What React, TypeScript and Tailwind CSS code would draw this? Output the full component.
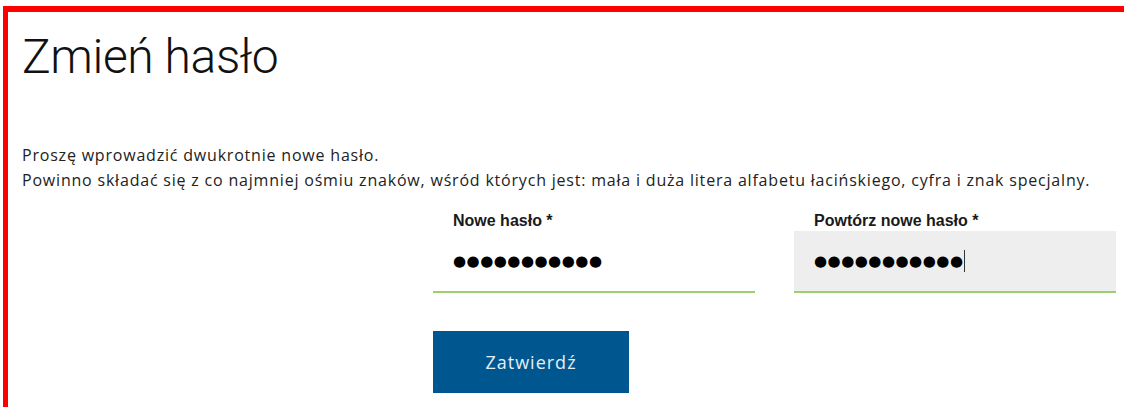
import React from "react";

const dots = "●●●●●●●●●●●";

function PasswordField({ label, focused }: { label: string; focused?: boolean }) {
  return (
    <div className="w-[322px]">
      <div className="px-5 h-[20px] leading-[20px] text-[16px] font-bold text-[#1a1a1a] font-['Liberation_Sans',Arial,sans-serif]">
        {label}
      </div>
      <div
        className={`h-[62px] flex items-center px-5 border-b-2 border-[#9ccf6e] ${
          focused ? "bg-[#eeeeee]" : "bg-white"
        }`}
      >
        <span className="text-[15px] tracking-[0.5px] text-black font-['DejaVu_Sans',sans-serif]">
          {dots}
        </span>
        {focused && <span className="w-px h-[22px] bg-[#333] ml-px" />}
      </div>
    </div>
  );
}

export default function App() {
  return (
    <div className="w-[1124px] h-[407px] bg-white overflow-hidden">
      <div className="ml-[3px] mt-[6px] h-[420px] border-l-[5px] border-t-[6px] border-[#ff0000] pl-[14px] font-['Open_Sans',sans-serif]">
        <h1 className="pt-[17px] text-[48px] leading-[56px] font-light tracking-[-0.4px] text-[#111] font-['Roboto',sans-serif]">
          Zmień hasło
        </h1>
        <div className="mt-[58px] text-[16px] leading-[25px] tracking-[0.8px] text-[#222]">
          <p>Proszę wprowadzić dwukrotnie nowe hasło.</p>
          <p>
            Powinno składać się z co najmniej ośmiu znaków, wśród których jest: mała i duża litera alfabetu
            łacińskiego, cyfra i znak specjalny.
          </p>
        </div>
        <div className="ml-[411px] mt-[18px] flex gap-[39px]">
          <PasswordField label="Nowe hasło *" />
          <PasswordField label="Powtórz nowe hasło *" focused />
        </div>
        <button className="ml-[411px] mt-[38px] w-[196px] h-[62px] bg-[#00568f] text-[#e6eef5] text-[18px] tracking-[1px]">
          Zatwierdź
        </button>
      </div>
    </div>
  );
}
